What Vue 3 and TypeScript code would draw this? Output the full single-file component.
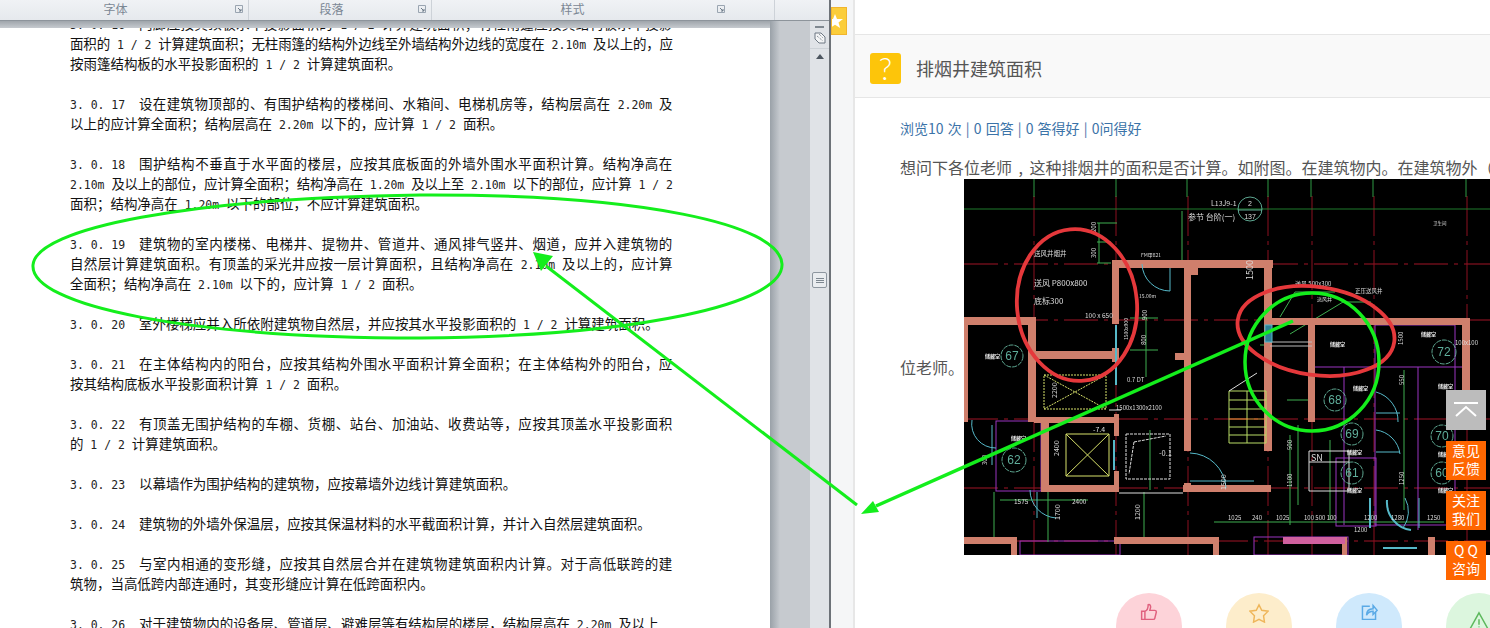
<script setup lang="ts">
interface Wall { x: number; y: number; w: number; h: number }
interface CadLabel { x: number; y: number; s: number; t: string; r?: number }

const CJK_WIDTH = 13.47
const ASCII_WIDTH = 6.9
const JUSTIFY_WIDTH = 603

// document text, one entry per line; '' is the blank line between clauses
const doc_lines: string[] = [
  '3. 0. 16  门廊应按其顶板水平投影面积的 1 / 2 计算建筑面积；有柱雨篷应按其结构板水平投影',
  '面积的 1 / 2 计算建筑面积；无柱雨篷的结构外边线至外墙结构外边线的宽度在 2.10m 及以上的，应',
  '按雨篷结构板的水平投影面积的 1 / 2 计算建筑面积。',
  '',
  '3. 0. 17  设在建筑物顶部的、有围护结构的楼梯间、水箱间、电梯机房等，结构层高在 2.20m 及',
  '以上的应计算全面积；结构层高在 2.20m 以下的，应计算 1 / 2 面积。',
  '',
  '3. 0. 18  围护结构不垂直于水平面的楼层，应按其底板面的外墙外围水平面积计算。结构净高在',
  '2.10m 及以上的部位，应计算全面积；结构净高在 1.20m 及以上至 2.10m 以下的部位，应计算 1 / 2',
  '面积；结构净高在 1.20m 以下的部位，不应计算建筑面积。',
  '',
  '3. 0. 19  建筑物的室内楼梯、电梯井、提物井、管道井、通风排气竖井、烟道，应并入建筑物的',
  '自然层计算建筑面积。有顶盖的采光井应按一层计算面积，且结构净高在 2.10m 及以上的，应计算',
  '全面积；结构净高在 2.10m 以下的，应计算 1 / 2 面积。',
  '',
  '3. 0. 20  室外楼梯应并入所依附建筑物自然层，并应按其水平投影面积的 1 / 2 计算建筑面积。',
  '',
  '3. 0. 21  在主体结构内的阳台，应按其结构外围水平面积计算全面积；在主体结构外的阳台，应',
  '按其结构底板水平投影面积计算 1 / 2 面积。',
  '',
  '3. 0. 22  有顶盖无围护结构的车棚、货棚、站台、加油站、收费站等，应按其顶盖水平投影面积',
  '的 1 / 2 计算建筑面积。',
  '',
  '3. 0. 23  以幕墙作为围护结构的建筑物，应按幕墙外边线计算建筑面积。',
  '',
  '3. 0. 24  建筑物的外墙外保温层，应按其保温材料的水平截面积计算，并计入自然层建筑面积。',
  '',
  '3. 0. 25  与室内相通的变形缝，应按其自然层合并在建筑物建筑面积内计算。对于高低联跨的建',
  '筑物，当高低跨内部连通时，其变形缝应计算在低跨面积内。',
  '',
  '3. 0. 26  对于建筑物内的设备层、管道层、避难层等有结构层的楼层，结构层高在 2.20m 及以上',
]

// a line with another line under it is justified by Word, so spread its CJK characters to fill the column
const line_spacing = (i: number) => {
  const line = doc_lines[i]
  const next = doc_lines[i + 1]
  if (!line || !next) return 0
  const ascii_count = (line.match(/[\x20-\x7e]/g) || []).length
  const cjk_count = line.length - ascii_count
  return (JUSTIFY_WIDTH - cjk_count * CJK_WIDTH - ascii_count * ASCII_WIDTH) / cjk_count
}

// ascii runs get the narrow mono face so they sit at half the width of the CJK text
const split_line = (line: string) => {
  return line.split(/([\x20-\x7e]+)/).filter((part) => part !== '').map((part) => {
    return { text: part, ascii: /^[\x20-\x7e]+$/.test(part) }
  })
}

const ribbon_groups = [
  { name: '字体', width: 249, pad: 17, launcher: 4 },
  { name: '段落', width: 183, pad: 17, launcher: 4 },
  { name: '样式', width: 343, pad: 61, launcher: 48 },
]

const walls: Wall[] = [
  { x: 1112, y: 260, w: 161, h: 8 },
  { x: 1112, y: 260, w: 7, h: 64 },
  { x: 1184, y: 261, w: 7, h: 190 },
  { x: 1190, y: 268, w: 8, h: 7 },
  { x: 1264, y: 260, w: 8, h: 191 },
  { x: 964, y: 317, w: 72, h: 8 },
  { x: 964, y: 317, w: 4, h: 105 },
  { x: 1028, y: 317, w: 8, h: 105 },
  { x: 1036, y: 351, w: 83, h: 8 },
  { x: 1112, y: 348, w: 7, h: 14 },
  { x: 1175, y: 353, w: 9, h: 7 },
  { x: 1266, y: 318, w: 204, h: 7 },
  { x: 1308, y: 324, w: 7, h: 98 },
  { x: 1462, y: 318, w: 8, h: 72 },
  { x: 1034, y: 417, w: 85, h: 6 },
  { x: 1041, y: 423, w: 8, h: 69 },
  { x: 1041, y: 485, w: 78, h: 7 },
  { x: 1114, y: 414, w: 5, h: 22 },
  { x: 1114, y: 471, w: 5, h: 21 },
  { x: 1183, y: 485, w: 88, h: 7 },
  { x: 1184, y: 483, w: 7, h: 9 },
  { x: 964, y: 537, w: 53, h: 7 },
  { x: 1011, y: 537, w: 6, h: 18 },
  { x: 1114, y: 537, w: 105, h: 7 },
  { x: 1213, y: 537, w: 6, h: 18 },
  { x: 1342, y: 537, w: 5, h: 18 },
  { x: 1428, y: 537, w: 7, h: 18 },
]

const red_h = [264, 320, 419, 488, 541]
const red_v = [1034, 1116, 1188, 1268, 1312, 1374, 1467]
const green_ticks = [1034, 1116, 1187, 1268, 1311, 1373, 1466]

const room_marks = [
  { x: 1012, y: 356, r: 11, n: '67' },
  { x: 1444, y: 352, r: 12, n: '72' },
  { x: 1335, y: 400, r: 11, n: '68' },
  { x: 1352, y: 434, r: 11, n: '69' },
  { x: 1352, y: 473, r: 11, n: '61' },
  { x: 1014, y: 460, r: 12, n: '62' },
  { x: 1442, y: 436, r: 11, n: '70' },
  { x: 1442, y: 473, r: 11, n: '60' },
]

const cad_labels: CadLabel[] = [
  { x: 1034, y: 256, s: 6.5, t: '送风井烟井' },
  { x: 1034, y: 286, s: 8, t: '送风 P800x800' },
  { x: 1034, y: 304, s: 8, t: '底标300' },
  { x: 1085, y: 318, s: 6.5, t: '100 x 650' },
  { x: 1211, y: 206, s: 7, t: 'L13J9-1' },
  { x: 1188, y: 220, s: 8, t: '参节 台阶(一)' },
  { x: 1141, y: 257, s: 5, t: 'FM甲821' },
  { x: 1139, y: 298, s: 5, t: '15.00m' },
  { x: 1355, y: 293, s: 5.500, t: '正压送风井' },
  { x: 1295, y: 286, s: 6, t: '送风 500x300' },
  { x: 1317, y: 301, s: 5, t: '送风井' },
  { x: 1433, y: 225, s: 4.500, t: '卫生间' },
  { x: 1116, y: 410, s: 6, t: '1500x1300x2100' },
  { x: 1127, y: 382, s: 6, t: '0.7 DT' },
  { x: 1093, y: 432, s: 7, t: '-7.4' },
  { x: 1159, y: 456, s: 7.500, t: '-0.1' },
  { x: 1311, y: 461, s: 9, t: 'SN' },
  { x: 1014, y: 504, s: 6.500, t: '1575' },
  { x: 1072, y: 504, s: 6.500, t: '2400' },
  { x: 1228, y: 520, s: 6, t: '1025' },
  { x: 1252, y: 520, s: 6, t: '240' },
  { x: 1276, y: 520, s: 6, t: '1025' },
  { x: 1304, y: 520, s: 6, t: '100 500 100' },
  { x: 1364, y: 520, s: 6, t: '1200' },
  { x: 1391, y: 520, s: 6, t: '1280' },
  { x: 1427, y: 520, s: 6, t: '1250' },
  { x: 1354, y: 532, s: 6, t: '1200' },
  { x: 1455, y: 345, s: 6, t: '100x100' },
  // rotated dimension figures
  { x: 1096, y: 232, s: 6, t: '200', r: -90 },
  { x: 1096, y: 258, s: 6, t: '300', r: -90 },
  { x: 1253, y: 280, s: 9, t: '1500', r: -90 },
  { x: 1147, y: 320, s: 6, t: '900', r: -90 },
  { x: 1146, y: 345, s: 6, t: '800', r: -90 },
  { x: 1128, y: 340, s: 5, t: '1500x900', r: -90 },
  { x: 1057, y: 398, s: 7, t: '2200', r: -90 },
  { x: 1059, y: 456, s: 7, t: '2400', r: -90 },
  { x: 987, y: 465, s: 6, t: '300', r: -90 },
  { x: 1060, y: 520, s: 7, t: '1700', r: -90 },
  { x: 1140, y: 520, s: 7, t: '1200', r: -90 },
  { x: 1226, y: 490, s: 7, t: '1500', r: -90 },
  { x: 1292, y: 450, s: 6, t: '500', r: -90 },
  { x: 1292, y: 487, s: 6, t: '1100', r: -90 },
  { x: 1403, y: 345, s: 6, t: '1500', r: -90 },
  { x: 1404, y: 385, s: 6, t: '550', r: -90 },
  { x: 1404, y: 485, s: 6, t: '1250', r: -90 },
]

const store_marks = [
  [985, 358], [1330, 346], [1421, 336], [1011, 440], [1353, 390],
  [1438, 388], [1347, 454], [1438, 456], [1347, 492], [1438, 492],
]

const side_buttons = [
  ['意见', '反馈'],
  ['关注', '我们'],
  ['Q Q', '咨询'],
]
</script>

<template>
  <div class="screen">
    <section class="word">
      <header class="ribbon">
        <div
          v-for="g in ribbon_groups"
          :key="g.name"
          class="ribbon_group"
          :style="{ width: g.width + 'px', paddingRight: g.pad + 'px' }"
        >
          <span class="group_name">{{ g.name }}</span>
          <svg class="launcher" :style="{ right: g.launcher + 'px' }" width="9" height="9" viewBox="0 0 9 9">
            <path d="M.5.5h7v7h-7z" fill="none" stroke="#9aa5b1" />
            <path d="M3 3l3 3M6 4v2H4" fill="none" stroke="#6d7a88" />
          </svg>
        </div>
      </header>
      <div class="word_body">
        <div class="page">
          <div class="page_text">
            <p v-for="(line, i) in doc_lines" :key="i" class="doc_line">
              <span
                v-for="(part, j) in split_line(line)"
                :key="j"
                :class="{ ascii: part.ascii }"
                :style="part.ascii ? undefined : { letterSpacing: line_spacing(i) + 'px' }"
              >{{ part.text }}</span>
            </p>
          </div>
        </div>
        <div class="gutter"></div>
        <div class="scrollbar">
          <i class="split_bar"></i>
          <svg class="ruler_icon" width="12" height="12" viewBox="0 0 12 12">
            <path d="M1 1h6l4 4v6H5L1 7z" fill="#f4f5f6" stroke="#6d7782" />
            <path d="M3 4l6 5M5 2l4 4" stroke="#6d7782" stroke-dasharray="1 1" fill="none" />
          </svg>
          <i class="scroll_rule"></i>
          <i class="arrow_up"></i>
          <div class="thumb">
            <i></i><i></i><i></i>
          </div>
        </div>
      </div>
    </section>

    <section class="browser">
      <div class="side_rail">
        <div class="bookmark">
          <svg width="12" height="14" viewBox="0 0 12 14">
            <path d="M3 0l2 5h6l-4.500 3.500 1.700 5.500L3 10.800-2 14l1-5.500L-5 5h6z" fill="#fff" />
          </svg>
        </div>
      </div>
      <div class="content">
        <div class="question_head">
          <div class="question_icon">?</div>
          <h1>排烟井建筑面积</h1>
        </div>
        <div class="question_body">
          <div class="stats">浏览10 次 | 0 回答 | 0 答得好 | 0问得好</div>
          <p class="question_line">想问下各位老师 , 这种排烟井的面积是否计算。如附图。在建筑物内。在建筑物外（不算）。请教各</p>
          <div class="picture_row">
            <span class="tail_text">位老师。</span>
            <svg class="cad" width="526" height="376" viewBox="964 179 526 376">
              <rect x="964" y="179" width="526" height="376" fill="#000" />
              <g class="cad_lines">
                <line v-for="y in red_h" :key="'rh' + y" x1="964" x2="1490" :y1="y" :y2="y" stroke="#a01526" stroke-dasharray="34 6 4 6" />
                <line v-for="x in red_v" :key="'rv' + x" :x1="x" :x2="x" y1="196" y2="555" stroke="#8c1020" stroke-dasharray="40 5 4 5" />
                <line x1="964" x2="1490" y1="209" y2="209" stroke="#1f7a2c" />
                <line v-for="x in green_ticks" :key="'gt' + x" :x1="x" :x2="x" y1="179" y2="197" stroke="#2f9a45" />

                <!-- purple room outlines -->
                <g fill="none" stroke="#9a35c0">
                  <rect x="996" y="421" width="45" height="70" />
                  <rect x="1336" y="458" width="40" height="68" />
                  <rect x="1375" y="325" width="80" height="200" />
                  <rect x="1020" y="541" width="100" height="14" />
                  <rect x="1254" y="537" width="94" height="18" />
                  <path d="M1312 367h150M1344 367v158M1418 367v163" />
                </g>

                <!-- green dimension lines -->
                <g fill="none" stroke="#3fae50">
                  <path d="M1099 223v40M1097 223h20M1097 242h14M1097 263h14" />
                  <path d="M1146 317v60M1130 318h28M1130 350h28" />
                  <path d="M994 492v50M1000 500h88M1048 492v50" />
                  <path d="M1144 492v50" />
                  <path d="M1214 522h230M1330 440v80M1290 435v90M1404 370v140" />
                  <path d="M1182 211v54" />
                  <path d="M1150 430v60" />
                  <path d="M1287 400h26M1298 425v80" />
                  <path d="M1295 292l-15 25M1295 292h40M1290 334l53-32h28" />
                  <path d="M1260 335h10M1260 345h10" />
                </g>

                <!-- walls -->
                <rect v-for="(w, i) in walls" :key="'w' + i" :x="w.x" :y="w.y" :width="w.w" :height="w.h" fill="#cf7f6c" />
                <rect x="1283" y="537" width="62" height="7" fill="#d0609f" />

                <!-- shafts and stairs -->
                <g fill="none" stroke="#d8e26a">
                  <path d="M1044 375h62v34h-62zM1044 375l62 34M1106 375l-62 34" stroke-dasharray="2 1" />
                  <path d="M1066 434h43v42h-43zM1066 434l43 42M1109 434l-43 42" />
                  <path d="M1229 391h37v52h-37zM1229 400h37M1229 409h37M1229 427h37M1229 435h37M1247 391v52" stroke="#b9dc66" />
                  <path d="M1229 419h37" stroke="#e69a3a" />
                  <path d="M1229 391l28-18" stroke="#ddd" />
                </g>
                <g fill="none" stroke="#ddd">
                  <path d="M1126 434h44v45h-44zM1134 442l32-6M1134 442l-5 32" stroke-dasharray="3 1" />
                  <path d="M1119 493h64" />
                  <path d="M1309 451h40v40h-40zM1309 462h40" />
                  <path d="M1109 410h12" />
                  <path d="M1270 342h42M1270 346h42" stroke="#bbb" />
                </g>

                <!-- doors -->
                <g fill="none" stroke="#56b9c9">
                  <path d="M1142 264a28 28 0 0 0 28 27M1170 268v23" />
                  <path d="M1190 453a37 37 0 0 1 36 35M1190 481h64" />
                  <path d="M972 420a24 24 0 0 0 24 28M992 425v40" />
                  <path d="M1030 490a28 28 0 0 0 26 28M1037 492v26" />
                  <path d="M1116 325v60M1114 440v30" stroke-width="2" />
                  <rect x="1265" y="325" width="7" height="17" fill="#2f7f96" />
                  <path d="M1376 392a30 30 0 0 1 22 30M1376 413h24M1376 430a28 28 0 0 1 24 24M1376 452h24" />
                  <path d="M1387 500a28 28 0 0 0 24 30M1370 498v30" stroke-width="2" />
                  <path d="M1405 498a28 28 0 0 1-2 30M1419 498v30" />
                  <path d="M1383 548h34" stroke-width="2" />
                </g>

                <g fill="none" stroke="#75d0b5" stroke-width=".8">
                  <circle v-for="m in room_marks" :key="m.n" :cx="m.x" :cy="m.y" :r="m.r" stroke-dasharray="5 1" />
                  <circle cx="1250" cy="209" r="12" />
                  <line x1="1238" y1="210" x2="1262" y2="210" />
                </g>
                <text v-for="m in room_marks" :key="'t' + m.n" :x="m.x" :y="m.y + 4" class="mark_text">{{ m.n }}</text>
                <text x="1250" y="206" class="small_mark">2</text>
                <text x="1250" y="219" class="small_mark">137</text>

                <text
                  v-for="(l, i) in cad_labels"
                  :key="'l' + i"
                  :x="l.x"
                  :y="l.y"
                  :font-size="l.s"
                  :transform="l.r ? `rotate(${l.r} ${l.x} ${l.y})` : undefined"
                  class="cad_label"
                >{{ l.t }}</text>
                <text v-for="(p, i) in store_marks" :key="'s' + i" :x="p[0]" :y="p[1]" class="store_mark">储藏室</text>
              </g>

              <!-- the red marks drawn on the picture -->
              <g fill="none" stroke="#e5383b" stroke-width="3.800">
                <ellipse cx="1077" cy="305" rx="60" ry="76" transform="rotate(-5 1077 305)" />
                <ellipse cx="1316" cy="331" rx="79" ry="44" transform="rotate(8 1316 331)" />
              </g>
            </svg>
          </div>
          <div class="actions">
            <div class="action like">
              <svg width="18" height="18" viewBox="0 0 22 22" fill="none" stroke="#e0607e" stroke-width="1.800">
                <path d="M6 10h-4v10h4zM6 10c3-1 4-5 4-8 2-1 3 1 3 3l-1 4h6c2 0 2 1 2 2l-2 8c0 1-1 1-2 1H6" />
              </svg>
            </div>
            <div class="action fav">
              <svg width="20" height="20" viewBox="0 0 22 22" fill="none" stroke="#efb65a" stroke-width="1.600">
                <path d="M11 2l3 6 7 1-5 5 1 7-6-3-6 3 1-7-5-5 7-1z" />
              </svg>
            </div>
            <div class="action share">
              <svg width="18" height="18" viewBox="0 0 22 22" fill="none" stroke="#5aaae6" stroke-width="1.800">
                <path d="M12 4H3v16h16v-9" />
                <path d="M8 15c0-5 3-8 8-8V3l5 6-5 5v-4c-3 0-6 1-8 5z" />
              </svg>
            </div>
            <div class="action warn">
              <svg width="20" height="20" viewBox="0 0 22 22" fill="none" stroke="#5cb85c" stroke-width="1.600">
                <path d="M11 2l10 18H1zM11 9v6M11 17v1" />
              </svg>
            </div>
          </div>
        </div>
      </div>
    </section>

    <!-- green marker pen drawn over both windows -->
    <svg class="marker" width="1490" height="628" viewBox="0 0 1490 628">
      <g fill="none" stroke="#14ee1c" stroke-width="3">
        <path d="M33 265C36 228 190 198 420 195C640 194 780 224 782 264C784 304 640 336 420 338C190 338 30 306 33 265Z" />
        <path d="M857 505L546 266" />
        <path d="M1293 321L876 506" stroke-width="3.500" />
        <ellipse cx="1312" cy="362" rx="67" ry="69" stroke-width="3.500" />
      </g>
      <path d="M533 252L553 256L541 271Z" fill="#14ee1c" />
      <path d="M861 514L873 501L879 512Z" fill="#14ee1c" />
    </svg>

    <div class="side_tools">
      <div class="to_top">
        <svg width="26" height="16" viewBox="0 0 26 16" fill="none" stroke="#fff" stroke-width="2">
          <path d="M1 1h24M3 14L13 5l10 9" />
        </svg>
      </div>
      <div v-for="b in side_buttons" :key="b[0]" class="side_btn">
        <span>{{ b[0] }}</span>
        <span>{{ b[1] }}</span>
      </div>
    </div>
  </div>
</template>

<style scoped>
.screen {
  position: relative;
  display: flex;
  width: 1490px;
  height: 628px;
  overflow: hidden;
  background: #fff;
  font-family: "Noto Sans CJK SC", "Liberation Sans", sans-serif;
}

/* word window */
.word {
  display: flex;
  flex-direction: column;
  width: 829px;
  flex: none;
}
.ribbon {
  position: relative;
  z-index: 2;
  display: flex;
  height: 20px;
  flex: none;
  background: linear-gradient(#f0f2f5, #e6e9ed);
  border-bottom: 1px solid #8d949b;
}
.ribbon_group {
  position: relative;
  display: flex;
  flex: none;
  align-items: center;
  justify-content: center;
  box-sizing: border-box;
  border-right: 1px solid #cdd2d8;
  font-size: 12px;
  color: #7b8794;
}
.group_name {
  line-height: 18px;
  margin-bottom: 2px;
}
.launcher {
  position: absolute;
  top: 5px;
}
.word_body {
  display: flex;
  flex: 1;
  min-height: 0;
  background: linear-gradient(#9fa5ab, #c6cacf 7px);
}
.page {
  width: 770px;
  flex: none;
  margin-top: 7px;
  overflow: hidden;
  background: #fff;
}
.page_text {
  margin-top: -15px;
  padding-left: 70px;
  white-space: pre;
  font-size: 13.470px;
  color: #111;
}
.doc_line {
  height: 20px;
  margin: 0;
  line-height: 20px;
}
.ascii {
  font-family: "DejaVu Sans Mono", "Liberation Mono", monospace;
  font-size: 11.460px;
  color: #222;
}
.gutter {
  flex: 1;
  background: linear-gradient(90deg, #9aa1a8, #c6cacf 10px);
}
.scrollbar {
  position: relative;
  display: flex;
  flex-direction: column;
  align-items: center;
  width: 19px;
  flex: none;
  background: #e0e3e7;
  box-sizing: border-box;
}
.split_bar {
  width: 9px;
  height: 2px;
  margin-top: 5px;
  background: #7f8890;
}
.ruler_icon {
  margin-top: 4px;
}
.scroll_rule {
  width: 100%;
  height: 1px;
  margin-top: 4px;
  background: #cdd2d7;
}
.arrow_up {
  width: 0;
  height: 0;
  margin-top: 5px;
  border-left: 4px solid transparent;
  border-right: 4px solid transparent;
  border-bottom: 5px solid #4d5660;
}
.thumb {
  position: absolute;
  top: 251px;
  left: 2px;
  display: flex;
  flex-direction: column;
  gap: 1px;
  align-items: center;
  justify-content: center;
  width: 15px;
  height: 16px;
  background: #e9ecef;
  border: 1px solid #8d969f;
  border-radius: 2px;
  box-sizing: border-box;
}
.thumb i {
  width: 8px;
  height: 1px;
  background: #7d8790;
}

/* browser window */
.browser {
  display: flex;
  flex: 1;
  min-width: 0;
  border-left: 2px solid #6d7278;
}
.side_rail {
  position: relative;
  width: 22px;
  flex: none;
  background: #f5f6f7;
}
.bookmark {
  display: flex;
  align-items: center;
  width: 16px;
  height: 28px;
  margin-top: 7px;
  background: #fbcd3a;
  border: 1px solid #f1b52d;
  box-sizing: border-box;
}
.content {
  flex: 1;
  min-width: 0;
  padding-top: 34px;
  overflow: hidden;
  border-left: 2px solid #e7e7e7;
}
.question_head {
  display: flex;
  align-items: center;
  gap: 15px;
  height: 64px;
  padding: 4px 0 0 15px;
  background: #f9f9f9;
  border-top: 1px solid #e6e6e6;
  border-bottom: 1px solid #e6e6e6;
  box-sizing: border-box;
}
.question_icon {
  display: flex;
  align-items: center;
  justify-content: center;
  width: 31px;
  height: 31px;
  background: #fdc50a;
  border-radius: 3px;
  font-family: Lato, "Liberation Sans", sans-serif;
  font-size: 31px;
  font-weight: 300;
  line-height: 31px;
  color: #fff;
}
h1 {
  margin: 0;
  font-size: 18px;
  font-weight: 400;
  color: #555;
}
.question_body {
  padding: 20px 0 0 45px;
}
.stats {
  height: 20px;
  font-size: 14px;
  line-height: 20px;
  word-spacing: 1px;
  color: #3b73a8;
}
.question_line {
  margin: 19px 0 0;
  height: 20px;
  white-space: nowrap;
  font-size: 16px;
  line-height: 20px;
  word-spacing: 3px;
  color: #555;
}
.picture_row {
  display: flex;
  align-items: center;
  width: 590px;
  margin-top: 2px;
}
.tail_text {
  width: 64px;
  flex: none;
  font-size: 16px;
  color: #555;
}
.cad {
  flex: none;
  display: block;
}
.cad_lines {
  filter: blur(.35px);
}
.mark_text {
  font-family: "Liberation Sans", sans-serif;
  font-size: 12px;
  fill: #5fae9b;
  text-anchor: middle;
}
.small_mark {
  font-family: "Liberation Sans", sans-serif;
  font-size: 7px;
  fill: #ddd;
  text-anchor: middle;
}
.cad_label {
  font-family: "Noto Sans CJK SC", "Liberation Sans", sans-serif;
  fill: #ddd;
}
.store_mark {
  font-family: "Noto Sans CJK SC", sans-serif;
  font-size: 5px;
  font-weight: 700;
  fill: #eee;
}
.actions {
  display: flex;
  gap: 44px;
  margin: 38px 0 0 216px;
}
.action {
  display: flex;
  justify-content: center;
  width: 66px;
  height: 66px;
  padding-top: 10px;
  flex: none;
  border-radius: 50%;
  box-sizing: border-box;
}
.like { background: #fdd3d9; }
.fav { background: #fdedcb; }
.share { background: #cfe9fc; }
.warn { background: #dcf6de; padding-top: 18px; }

/* overlays */
.marker {
  position: absolute;
  top: 0;
  left: 0;
  pointer-events: none;
}
.side_tools {
  position: absolute;
  top: 390px;
  left: 1446px;
  display: flex;
  flex-direction: column;
  gap: 11px;
  width: 40px;
}
.to_top {
  display: flex;
  align-items: center;
  justify-content: center;
  height: 40px;
  background: #bcbcbc;
}
.side_btn {
  display: flex;
  flex-direction: column;
  align-items: center;
  justify-content: center;
  height: 39px;
  padding-bottom: 3px;
  box-sizing: border-box;
  background: #ff6600;
  font-size: 14px;
  line-height: 18px;
  color: #fff;
}
</style>
